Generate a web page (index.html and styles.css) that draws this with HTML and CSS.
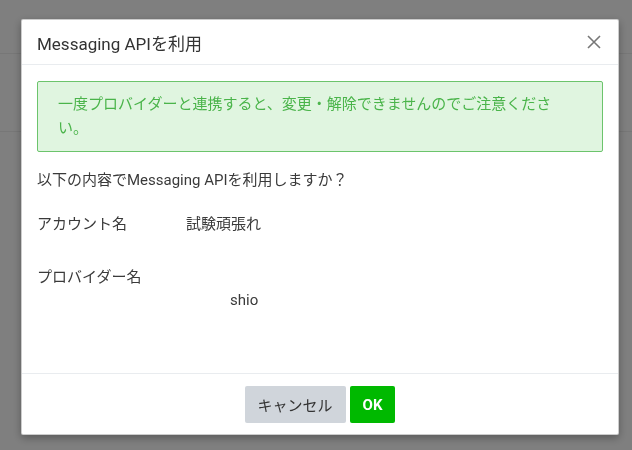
FILE: index.html
```html
<!DOCTYPE html>
<html lang="ja">
<head>
    <meta charset="UTF-8">
    <meta name="viewport" content="width=device-width, initial-scale=1.0">
    <title>Messaging APIを利用</title>
    <link rel="stylesheet" href="styles.css">
</head>
<body>
    <!-- 背景のページ -->
    <div class="page">
        <div class="page-header"></div>
        <div class="page-tabs"></div>
    </div>

    <!-- モーダル -->
    <div class="backdrop">
        <div class="modal">
            <div class="modal-header">
                <h4 class="modal-title">Messaging APIを利用</h4>
                <button class="close" type="button" aria-label="Close">
                    <svg width="14" height="14" viewBox="0 0 14 14">
                        <path d="M1 1L13 13M13 1L1 13" stroke="#777" stroke-width="1.6" fill="none"/>
                    </svg>
                </button>
            </div>
            <div class="modal-body">
                <div class="alert">一度プロバイダーと連携すると、変更・解除できませんのでご注意ください。</div>
                <p class="question">以下の内容でMessaging APIを利用しますか？</p>
                <div class="info-row">
                    <span class="info-label">アカウント名</span>
                    <span class="info-value">試験頑張れ</span>
                </div>
                <div class="info-row provider">
                    <span class="info-label">プロバイダー名</span>
                </div>
                <div class="provider-value">shio</div>
            </div>
            <div class="modal-footer">
                <button class="btn btn-cancel" type="button">キャンセル</button>
                <button class="btn btn-ok" type="button">OK</button>
            </div>
        </div>
    </div>
</body>
</html>
```

FILE: styles.css
```css
/* 全体 */
body {
    margin: 0;
    font-family: Roboto, "Noto Sans CJK JP", sans-serif;
    color: #333;
    background: #fff;
}
/* 背景のページ */
.page {
    height: 450px;
}
.page-header {
    height: 53px;
    border-bottom: 1px solid #eee;
}
.page-tabs {
    height: 77px;
    border-bottom: 1px solid #eee;
}
/* 半透明の背景 */
.backdrop {
    position: fixed;
    inset: 0;
    background: rgba(0, 0, 0, 0.5);
}
/* モーダル本体 */
.modal {
    position: absolute;
    top: 19px;
    left: 21px;
    width: 596px;
    background: #fff;
    border: 1px solid rgba(0, 0, 0, 0.2);
    border-radius: 2px;
    box-shadow: 0 3px 9px rgba(0, 0, 0, 0.3);
}
.modal-header {
    display: flex;
    align-items: center;
    justify-content: space-between;
    height: 44px;
    padding: 0 15px;
    border-bottom: 1px solid #e9ecef;
}
.modal-title {
    margin: 0;
    font-size: 17px;
    font-weight: normal;
    color: #333;
}
.close {
    display: flex;
    padding: 0;
    margin-right: 2px;
    border: none;
    background: none;
}
.modal-body {
    height: 276px;
    padding: 16px 15px;
    font-size: 15px;
    line-height: 24px;
    color: #3a3a3a;
}
/* 注意書き */
.alert {
    padding: 10px 40px 11px 20px;
    border: 1px solid #6cc46c;
    border-radius: 2px;
    background: #e0f5e0;
    color: #4ab44a;
}
.question {
    margin: 16px 0 0;
}
.info-row {
    display: flex;
    margin-top: 20px;
}
.info-row.provider {
    margin-top: 29px;
}
.info-label {
    width: 149px;
}
.provider-value {
    padding-left: 193px;
    line-height: 20px;
    margin-top: 1px;
}
/* フッター */
.modal-footer {
    display: flex;
    justify-content: center;
    gap: 4px;
    padding: 12px 15px 11px;
    border-top: 1px solid #e9ecef;
}
.btn {
    height: 37px;
    padding: 0 13px;
    border: none;
    border-radius: 2px;
    font-family: Roboto, "Noto Sans CJK JP", sans-serif;
    font-size: 15px;
}
.btn-cancel {
    background: #d0d5db;
    color: #333;
}
.btn-ok {
    background: #00b900;
    color: #fff;
    font-weight: bold;
}
```
